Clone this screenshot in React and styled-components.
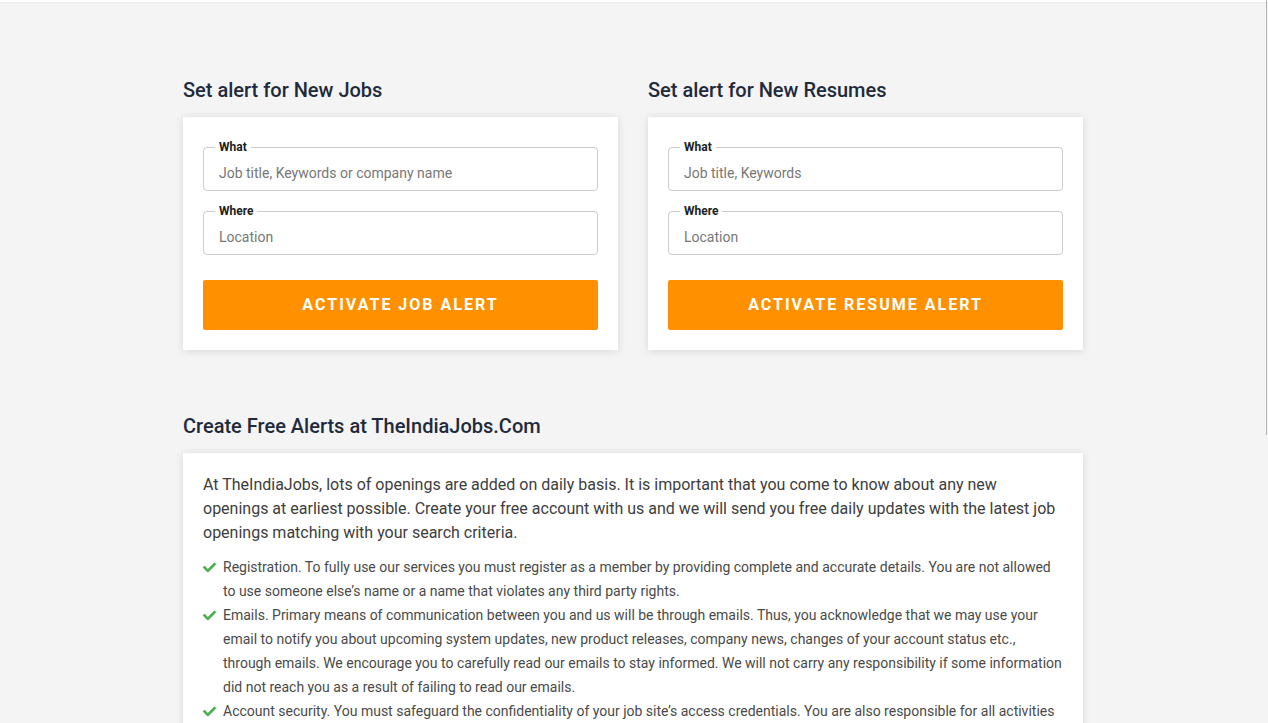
import styled, { createGlobalStyle } from 'styled-components'
import { FaCheck } from 'react-icons/fa'

const GlobalStyle = createGlobalStyle`
html, body {
  margin: 0;
  padding: 0;
  overflow: hidden;
  background: #f4f4f4;
  font-family: Roboto, "Liberation Sans", sans-serif;
}
* { box-sizing: border-box; }
`

const termos = [
  'Registration. To fully use our services you must register as a member by providing complete and accurate details. You are not allowed to use someone else’s name or a name that violates any third party rights.',
  'Emails. Primary means of communication between you and us will be through emails. Thus, you acknowledge that we may use your email to notify you about upcoming system updates, new product releases, company news, changes of your account status etc., through emails. We encourage you to carefully read our emails to stay informed. We will not carry any responsibility if some information did not reach you as a result of failing to read our emails.',
  'Account security. You must safeguard the confidentiality of your job site’s access credentials. You are also responsible for all activities that occur under your account, whether or not you authorized them.',
]

function AlertForm({ titulo, placeholder, botao }) {
  return (
    <Coluna>
      <Titulo>{titulo}</Titulo>
      <Card>
        <Campo>
          <Legenda>What</Legenda>
          <Input placeholder={placeholder} />
        </Campo>
        <Campo>
          <Legenda>Where</Legenda>
          <Input placeholder='Location' />
        </Campo>
        <Botao>{botao}</Botao>
      </Card>
    </Coluna>
  )
}

function App() {
  return (
    <>
      <GlobalStyle />
      <TopoBranco />
      <Pagina>
        <Container>
          <Linha>
            <AlertForm titulo='Set alert for New Jobs' placeholder='Job title, Keywords or company name' botao='Activate Job Alert' />
            <AlertForm titulo='Set alert for New Resumes' placeholder='Job title, Keywords' botao='Activate Resume Alert' />
          </Linha>
          <Secao>
            <Titulo>Create Free Alerts at TheIndiaJobs.Com</Titulo>
            <CardTexto>
              <P>
                At TheIndiaJobs, lots of openings are added on daily basis. It is important that you come to know about any new
                openings at earliest possible. Create your free account with us and we will send you free daily updates with the latest job
                openings matching with your search criteria.
              </P>
              <Lista>
                {termos.map((t) => (
                  <Item key={t}>
                    <Icone><FaCheck /></Icone>
                    <span>{t}</span>
                  </Item>
                ))}
              </Lista>
            </CardTexto>
          </Secao>
        </Container>
      </Pagina>
      <Rolagem />
    </>
  )
}

export default App

const TopoBranco = styled.div`
height: 3px;
background: #ffffff;
border-bottom: 1px solid #ebebeb;
`
const Pagina = styled.main`
padding: 75px 2px 40px 0;
`
const Container = styled.div`
width: 900px;
margin: 0 auto;
`
const Linha = styled.div`
display: flex;
gap: 30px;
`
const Coluna = styled.div`
flex: 1;
`
const Titulo = styled.h3`
margin: 0 0 15px;
font-size: 20px;
line-height: 24px;
font-weight: 500;
color: #1f2a3c;
`
const Card = styled.div`
background: #ffffff;
padding: 20px;
box-shadow: 0 1px 8px rgba(0, 0, 0, 0.12);
display: flex;
flex-direction: column;
gap: 10px;
`
const Campo = styled.fieldset`
margin: 0;
padding: 0 15px 2px;
border: 1px solid #cccccc;
border-radius: 4px;
min-width: 0;
`
const Legenda = styled.legend`
padding: 0 4px;
margin-left: -4px;
font-size: 12px;
font-weight: 700;
color: #222222;
line-height: 20px;
`
const Input = styled.input`
display: block;
width: 100%;
border: none;
outline: none;
padding: 0;
height: 31px;
font-family: Roboto, "Liberation Sans", sans-serif;
font-size: 14px;
color: #333;
background: transparent;
&::placeholder { color: #777777; }
`
const Botao = styled.button`
margin-top: 15px;
height: 50px;
border: none;
border-radius: 2px;
background: #ff9100;
color: #ffffff;
font-family: Roboto, "Liberation Sans", sans-serif;
font-size: 16px;
font-weight: 700;
letter-spacing: 2px;
text-transform: uppercase;
padding-bottom: 2px;
cursor: pointer;
`
const Secao = styled.section`
margin-top: 64px;
`
const CardTexto = styled.div`
background: #ffffff;
padding: 20px 20px 20px;
box-shadow: 0 1px 8px rgba(0, 0, 0, 0.12);
`
const P = styled.p`
margin: 0 0 10px;
font-size: 16px;
line-height: 24px;
color: #3d3d3d;
`
const Lista = styled.ul`
list-style: none;
margin: 0;
padding: 0;
`
const Item = styled.li`
display: flex;
font-size: 14px;
line-height: 24px;
color: #4a4a4a;
`
const Icone = styled.span`
flex: 0 0 20px;
color: #4caf50;
font-size: 13px;
display: flex;
padding-top: 6px;
`
const Rolagem = styled.div`
position: fixed;
top: 0;
right: 1px;
width: 1px;
height: 435px;
background: #b3b3b3;
`
